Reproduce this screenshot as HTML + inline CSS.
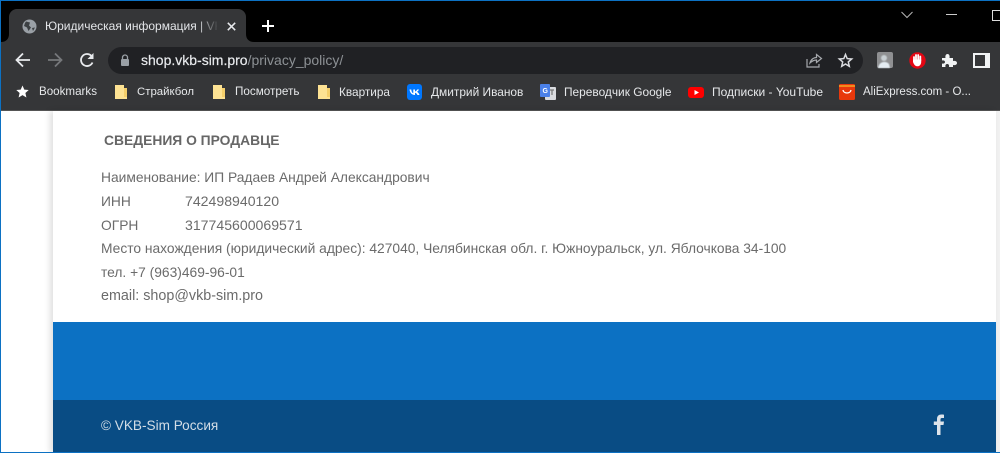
<!DOCTYPE html>
<html lang="ru">
<head>
<meta charset="utf-8">
<style>
html,body{margin:0;padding:0;width:1000px;height:453px;overflow:hidden;background:#fff}
body{position:relative;font-family:"Liberation Sans","Noto Sans CJK SC",sans-serif}
.a{position:absolute;white-space:nowrap}
.bm{font-size:12px;line-height:16px;top:84px;color:#e6e8ea}
.c{font-size:13.8px;line-height:20px;color:#6b6b6b;left:101px}
svg{position:absolute;overflow:visible}
</style>
</head>
<body>
<!-- chrome -->
<div class="a" style="left:0;top:0;width:1000px;height:42px;background:#000"></div>
<div class="a" style="left:0;top:42px;width:1000px;height:68px;background:#353638"></div>
<div class="a" style="left:0;top:110px;width:1000px;height:1px;background:#555"></div>

<!-- tab -->
<div class="a" style="left:9px;top:9px;width:237px;height:33px;background:#353638;border-radius:8px 8px 0 0"></div>
<svg style="left:0;top:34px" width="9" height="8"><path d="M1 8H9V0C9 5 6 8 1 8Z" fill="#353638"/></svg>
<svg style="left:246px;top:34px" width="9" height="8"><path d="M0 0V8H8C3 8 0 5 0 0Z" fill="#353638"/></svg>
<svg style="left:22px;top:19px" width="15" height="15" viewBox="0 0 15 15"><circle cx="7.500" cy="7.500" r="7" fill="#9aa0a6"/><path d="M4 2.500L8 3.500L7 6.500L9 8.500L6.500 12L5 8.500L2 7L3 4ZM10 9L13 8.500L11 12Z" fill="#3c4043"/></svg>
<div class="a" style="left:45px;top:18px;width:172px;height:16px;overflow:hidden;font-size:12px;line-height:16px;color:#e3e5e8">Юридическая информация | VKB-Sim</div>
<div class="a" style="left:197px;top:18px;width:22px;height:16px;background:linear-gradient(90deg,rgba(53,54,56,0),#353638)"></div>
<svg style="left:227px;top:22px" width="9" height="9" viewBox="0 0 9 9"><path d="M.8.800L8.200 8.200M8.200.800L.8 8.200" stroke="#e8eaed" stroke-width="1.500"/></svg>
<svg style="left:262px;top:20px" width="12" height="12" viewBox="0 0 12 12"><path d="M6 0V12M0 6H12" stroke="#fff" stroke-width="2"/></svg>

<!-- window controls -->
<svg style="left:901px;top:11px" width="12" height="8" viewBox="0 0 12 8"><path d="M.5 1L6 6.500L11.500 1" fill="none" stroke="#b5b5b5" stroke-width="1"/></svg>
<div class="a" style="left:946px;top:14px;width:11px;height:1px;background:#ccc"></div>
<div class="a" style="left:992px;top:10px;width:10px;height:9px;border:1px solid #ddd"></div>

<!-- nav -->
<svg style="left:15px;top:52px" width="16" height="16" viewBox="0 0 16 16"><path d="M15 8H2M8 1.500L1.500 8L8 14.500" fill="none" stroke="#e8eaed" stroke-width="1.800"/></svg>
<svg style="left:47px;top:52px" width="16" height="16" viewBox="0 0 16 16"><path d="M1 8H14M8 1.500L14.500 8L8 14.500" fill="none" stroke="#76787b" stroke-width="1.800"/></svg>
<svg style="left:79px;top:52px" width="16" height="16" viewBox="0 0 16 16"><path d="M13.500 10.500A6 6 0 1 1 12.300 3.800" fill="none" stroke="#e8eaed" stroke-width="1.800"/><path d="M14.500 1V7H8.500Z" fill="#e8eaed"/></svg>

<!-- omnibox -->
<div class="a" style="left:108px;top:47px;width:755px;height:27px;background:#202124;border-radius:14px"></div>
<svg style="left:120px;top:54px" width="10" height="13" viewBox="0 0 10 13"><path d="M2.500 5V3.500a2.500 2.500 0 0 1 5 0V5" fill="none" stroke="#9aa0a6" stroke-width="1.300"/><rect x="1" y="5" width="8" height="7" rx="1" fill="#9aa0a6"/></svg>
<div class="a" style="left:141px;top:52px;font-size:14px;line-height:17px;color:#e8eaed;-webkit-text-stroke:.2px #e8eaed">shop.vkb-sim.pro<span style="color:#8d9195;-webkit-text-stroke:0">/privacy_policy/</span></div>
<svg style="left:806px;top:53px" width="16" height="15" viewBox="0 0 16 15"><path d="M1 6V14H13V11" fill="none" stroke="#a6a9ad" stroke-width="1.200"/><path d="M4 10C5 6 8 4.500 10.500 4.500V1.500L15.500 5.500L10.500 9.500V7C8 7 6 8 4 10Z" fill="none" stroke="#a6a9ad" stroke-width="1.200"/></svg>
<svg style="left:838px;top:53px" width="15" height="15" viewBox="0 0 15 15"><path d="M7.500 1.500L9.200 5.600L13.700 6L10.300 8.900L11.300 13.300L7.500 11L3.700 13.300L4.700 8.900L1.300 6L5.800 5.600Z" fill="none" stroke="#dadce0" stroke-width="1.500"/></svg>

<!-- extensions -->
<div class="a" style="left:877px;top:52px;width:16px;height:16px;background:#8f9092;border-radius:2px;overflow:hidden"></div>
<svg style="left:877px;top:52px;filter:blur(.6px)" width="16" height="16" viewBox="0 0 16 16"><circle cx="7" cy="6" r="3" fill="#c9d0d4"/><path d="M1 16C2 11 5 10 7 10C10 10 11 11 12 12L13 16Z" fill="#e4ecf2"/></svg>
<svg style="left:909px;top:52px" width="17" height="17" viewBox="0 0 17 17"><circle cx="8.500" cy="8.500" r="8.200" fill="#e30613"/><path d="M5 8.500V5M7 7.500V3M9.200 7.500V3M11.300 8.500V4.500" stroke="#fff" stroke-width="1.800" stroke-linecap="round"/><path d="M4.200 8L4 7.500L4 10C5 13 6.500 14.300 8.500 14.300C11 14.300 12.200 12 12.200 10V7.500H4.200Z" fill="#fff"/></svg>
<svg style="left:941px;top:52px" width="16" height="16" viewBox="0 0 16 16"><path d="M1 6H4.500C4 3.500 5 2 6.500 2C8 2 9 3.500 8.500 6H12V9C14.500 8.500 16 9.500 16 11C16 12.500 14.500 13.500 12 13V15H8C8.500 13 7.500 12 6.200 12C5 12 4 13 4.500 15H1V11.500C3 12 4 11 4 10C4 9 3 8 1 8.500Z" fill="#f1f3f4"/></svg>
<div class="a" style="left:973px;top:53px;width:10px;height:11px;border:2px solid #f1f3f4;border-right-width:5px"></div>

<!-- bookmarks -->
<svg style="left:16px;top:85px" width="13" height="13" viewBox="0 0 13 13"><path d="M6.500 .5L8.300 4.600L12.700 5L9.400 8L10.400 12.500L6.500 10.100L2.600 12.500L3.600 8L.3 5L4.700 4.600Z" fill="#fff"/></svg>
<div class="a bm" style="left:39px;font-size:11.6px">Bookmarks</div>

<svg style="left:115px;top:85px" width="12" height="14" viewBox="0 0 12 14"><path d="M0 0H9V3H12V14H0Z" fill="#fde293"/><path d="M9 3H12V12H9Z" fill="#f5cf6a"/></svg>
<div class="a bm" style="left:137px;font-size:11.4px">Страйкбол</div>
<svg style="left:213px;top:85px" width="12" height="14" viewBox="0 0 12 14"><path d="M0 0H9V3H12V14H0Z" fill="#fde293"/><path d="M9 3H12V12H9Z" fill="#f5cf6a"/></svg>
<div class="a bm" style="left:235px;font-size:11.7px">Посмотреть</div>
<svg style="left:318px;top:85px" width="12" height="14" viewBox="0 0 12 14"><path d="M0 0H9V3H12V14H0Z" fill="#fde293"/><path d="M9 3H12V12H9Z" fill="#f5cf6a"/></svg>
<div class="a bm" style="left:339px;font-size:11.8px">Квартира</div>

<svg style="left:407px;top:84px" width="15" height="16" viewBox="0 0 15 16"><rect width="15" height="16" rx="3" fill="#0077ff"/><path d="M2.500 5.500C3 9 5 11 8 11V8.700C9.200 8.800 10 9.800 10.500 11H12.500C12 9.400 11 8.300 9.900 7.900C10.900 7.200 11.700 6.200 12 5.500H10.200C9.800 6.500 9 7.300 8 7.500V5.500H6.300V9.300C5.300 9 4.400 7.500 4.300 5.500Z" fill="#fff"/></svg>
<div class="a bm" style="left:431px;font-size:11.9px">Дмитрий Иванов</div>

<svg style="left:540px;top:84px" width="16" height="16" viewBox="0 0 16 16"><rect x="5" y="3" width="11" height="13" rx="1" fill="#dadce0"/><rect width="10" height="13" rx="1" fill="#4a80e8"/><text x="2.500" y="9" font-size="7" font-weight="bold" fill="#fff" font-family="Liberation Sans">G</text><path d="M10 6H14M12 6V11" stroke="#777" stroke-width="1.200"/></svg>
<div class="a bm" style="left:564px;font-size:11.9px">Переводчик Google</div>

<svg style="left:688px;top:87px" width="16" height="11" viewBox="0 0 16 11"><rect width="16" height="11" rx="3" fill="#f00"/><path d="M6.500 3L11 5.500L6.500 8Z" fill="#fff"/></svg>
<div class="a bm" style="left:712px">Подписки - YouTube</div>

<svg style="left:839px;top:84px" width="16" height="16" viewBox="0 0 16 16"><rect width="16" height="16" rx="1.500" fill="#e8380c"/><path d="M0 2H16" stroke="#f5a623" stroke-width="1.500"/><path d="M4 6C4.500 10 11.500 10 12 6" fill="none" stroke="#fff" stroke-width="1.300"/></svg>
<div class="a bm" style="left:863px;font-size:11.5px">AliExpress.com - О...</div>

<!-- page -->
<div class="a" style="left:996px;top:111px;width:4px;height:342px;background:#f1f1f1"></div>
<div class="a" style="left:53px;top:111px;width:943px;height:342px;background:#fff;box-shadow:-3px 0 6px rgba(0,0,0,.13)"></div>

<div class="a" style="left:104px;top:131px;font-size:13.85px;line-height:18px;font-weight:bold;color:#666">СВЕДЕНИЯ О ПРОДАВЦЕ</div>
<div class="a c" style="top:168px">Наименование: ИП Радаев Андрей Александрович</div>
<div class="a c" style="top:192px">ИНН</div>
<div class="a c" style="top:191px;left:185px;font-size:14.1px">742498940120</div>
<div class="a c" style="top:216px">ОГРН</div>
<div class="a c" style="top:215px;left:185px;font-size:14.1px">317745600069571</div>
<div class="a c" style="top:239px">Место нахождения (юридический адрес): 427040, Челябинская обл. г. Южноуральск, ул. Яблочкова 34-100</div>
<div class="a c" style="top:263px">тел. +7 (963)469-96-01</div>
<div class="a c" style="top:286px;font-size:14.35px">email: shop@vkb-sim.pro</div>

<!-- footer -->
<div class="a" style="left:53px;top:322px;width:943px;height:78px;background:#0c71c3"></div>
<div class="a" style="left:53px;top:400px;width:943px;height:53px;background:#094c84"></div>
<div class="a" style="left:101px;top:417px;font-size:13.6px;line-height:18px;color:#d3dde6">© VKB-Sim Россия</div>
<svg style="left:933px;top:414px" width="12" height="21" viewBox="0 0 12 21"><path d="M4 21V11H.8V7.500H4V5C4 2 5.800.5 8.300.5C9.500.5 10.500.6 11 .7V4H9C7.800 4 7.500 4.600 7.500 5.500V7.500H11L10.500 11H7.500V21Z" fill="#dde3ea"/></svg>

<!-- window border -->
<div class="a" style="left:0;top:0;width:1000px;height:1px;background:#0c71c3"></div>
<div class="a" style="left:0;top:0;width:1px;height:453px;background:#0c71c3"></div>
<div class="a" style="left:0;top:452px;width:1000px;height:1px;background:#0c71c3"></div>
</body>
</html>
